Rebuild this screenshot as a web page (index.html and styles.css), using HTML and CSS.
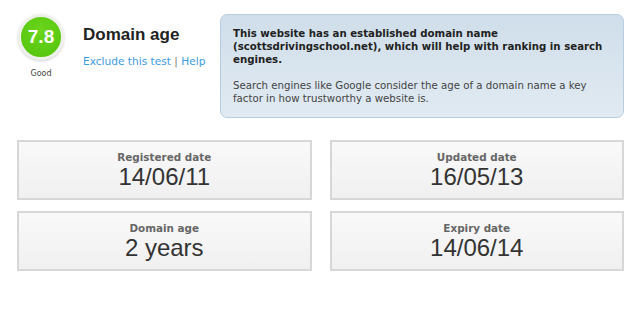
FILE: index.html
```html
<!DOCTYPE html>
<html lang="en">
<head>
  <meta charset="UTF-8" />
  <title>Domain age</title>
  <link rel="stylesheet" href="styles.css">
</head>
<body>
  <div class="section">
    <div class="head">
      <div class="score">
        <div class="badge">7.8</div>
        <div class="grade">Good</div>
      </div>
      <div class="title">
        <h2>Domain age</h2>
        <div class="links"><a href="#">Exclude this test</a> <span class="sep">|</span> <a href="#">Help</a></div>
      </div>
      <div class="info">
        <p class="lead">This website has an established domain name (scottsdrivingschool.net), which will help with ranking in search engines.</p>
        <p>Search engines like Google consider the age of a domain name a key factor in how trustworthy a website is.</p>
      </div>
    </div>
    <div class="stats">
      <div class="stat">
        <div class="label">Registered date</div>
        <div class="value">14/06/11</div>
      </div>
      <div class="stat">
        <div class="label">Updated date</div>
        <div class="value">16/05/13</div>
      </div>
      <div class="stat">
        <div class="label">Domain age</div>
        <div class="value">2 years</div>
      </div>
      <div class="stat">
        <div class="label">Expiry date</div>
        <div class="value">14/06/14</div>
      </div>
    </div>
  </div>
</body>
</html>
```
FILE: styles.css
```css
* {
  box-sizing: border-box;
}
body {
  margin: 0;
  background: #fff;
  font-family: 'DejaVu Sans', Verdana, sans-serif;
  color: #333;
}
.section {
  padding: 14px 16px 0 17px;
}
.head {
  display: flex;
  align-items: flex-start;
}
.score {
  width: 48px;
  display: flex;
  flex-direction: column;
  align-items: center;
}
.badge {
  width: 46px;
  height: 46px;
  border-radius: 50%;
  border: 3px solid #eef0ea;
  background: radial-gradient(circle at 50% 35%, #6ad61c, #52c20c);
  color: #fff;
  font-family: 'Liberation Sans', Arial, sans-serif;
  font-weight: bold;
  font-size: 19px;
  display: flex;
  align-items: center;
  justify-content: center;
  box-shadow: 0 1px 3px rgba(0, 0, 0, 0.2);
}
.grade {
  font-size: 8px;
  color: #444;
  margin-top: 9px;
}
.title {
  width: 137px;
  margin-left: 18px;
  margin-top: 11px;
}
h2 {
  margin: 0;
  font-family: 'Liberation Sans', Arial, sans-serif;
  font-size: 17px;
  color: #222;
}
.links {
  margin-top: 10px;
  font-size: 10.6px;
}
.links a {
  color: #3d9be0;
  text-decoration: none;
}
.sep {
  color: #777;
}
.info {
  flex: 1;
  background: linear-gradient(to bottom, #cfdeea, #e1eaf2);
  border: 1px solid #b9cde0;
  border-radius: 7px;
  padding: 12px 12px 12px 12px;
  font-size: 10.2px;
  line-height: 13px;
  color: #333;
}
.info p {
  margin: 0;
  color: #444;
}
.info .lead {
  font-weight: bold;
  color: #222;
  margin-bottom: 13px;
}
.stats {
  display: grid;
  grid-template-columns: 1fr 1fr;
  column-gap: 18px;
  row-gap: 11px;
  margin-top: 22px;
}
.stat {
  height: 60px;
  border: 2px solid #d7d7d7;
  background: linear-gradient(to bottom, #f9f9f9, #f0f0f0);
  text-align: center;
  padding-top: 9px;
}
.label {
  font-size: 10.4px;
  line-height: 12px;
  font-weight: bold;
  color: #666;
}
.value {
  font-family: 'Liberation Sans', Arial, sans-serif;
  font-size: 24px;
  line-height: 28px;
  color: #333;
}
```
